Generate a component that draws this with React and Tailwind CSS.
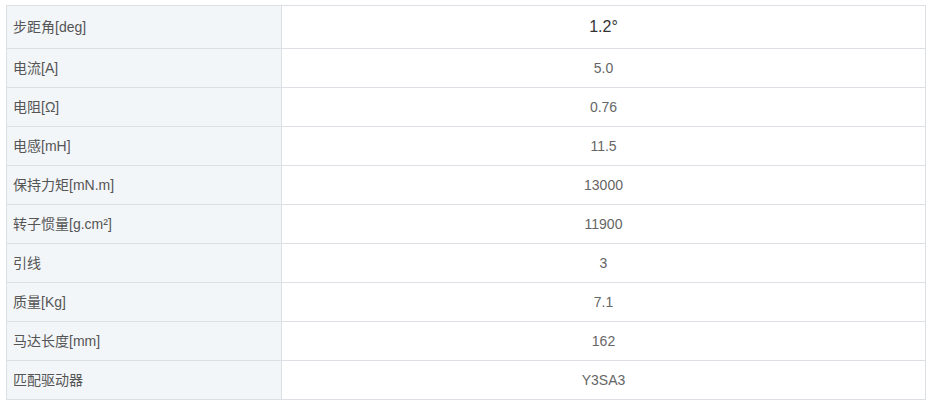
import React from 'react';

const rows = [
  ['步距角[deg]', '1.2°'],
  ['电流[A]', '5.0'],
  ['电阻[Ω]', '0.76'],
  ['电感[mH]', '11.5'],
  ['保持力矩[mN.m]', '13000'],
  ['转子惯量[g.cm²]', '11900'],
  ['引线', '3'],
  ['质量[Kg]', '7.1'],
  ['马达长度[mm]', '162'],
  ['匹配驱动器', 'Y3SA3'],
];

const App = () => {
  return (
    <div
      className="min-h-screen bg-white pl-[6px] pt-[5px]"
      style={{ fontFamily: '"Liberation Sans", "Noto Sans CJK SC", sans-serif' }}
    >
      <table className="w-[920px] border-collapse border border-[#dcdfe3] text-[14px]">
        <tbody>
          {rows.map(([label, value], i) => (
            <tr key={label} className={i === 0 ? 'h-[43px]' : 'h-[39px]'}>
              <td className="w-[275px] border border-[#dcdfe3] bg-[#f3f6f9] pl-[6px] text-[#555]">
                {label}
              </td>
              <td
                className={
                  i === 0
                    ? 'border border-[#dcdfe3] text-center text-[16px] text-[#333]'
                    : 'border border-[#dcdfe3] text-center text-[#666]'
                }
              >
                {value}
              </td>
            </tr>
          ))}
        </tbody>
      </table>
    </div>
  );
};

export default App;
